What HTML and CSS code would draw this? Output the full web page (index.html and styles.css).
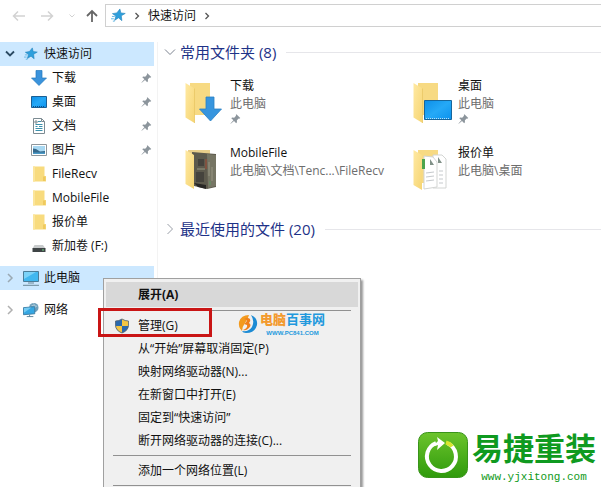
FILE: index.html
```html
<!DOCTYPE html>
<html lang="zh-CN">
<head>
    <meta charset="UTF-8">
    <meta name="viewport" content="width=device-width, initial-scale=1.0">
    <title>快速访问</title>
    <link rel="stylesheet" href="styles.css">
</head>
<body>
    <!-- shared icons -->
    <svg class="defs" aria-hidden="true">
        <defs>
            <linearGradient id="yellow" x1="0" y1="0" x2="1" y2="1">
                <stop offset="0" stop-color="#ffe9a2"/>
                <stop offset="1" stop-color="#f6d573"/>
            </linearGradient>
            <linearGradient id="sky" x1="0" y1="0" x2="1" y2="1">
                <stop offset="0" stop-color="#0d8fe8"/>
                <stop offset="0.5" stop-color="#25a9f7"/>
                <stop offset="1" stop-color="#0b92ee"/>
            </linearGradient>
            <linearGradient id="green" x1="0" y1="0" x2="0" y2="1">
                <stop offset="0" stop-color="#6cc42c"/>
                <stop offset="1" stop-color="#2f9a0c"/>
            </linearGradient>
        </defs>
        <symbol id="star" viewBox="0 0 16 16">
            <path d="M9.500 1l1 4.200 4.700.600-4.200 2.500.600 5.200-3.600-3-4.200 2.700 1.400-4.600L1.500 6l4.700-.800z" fill="#2e9fdc" stroke="#1c7fb8" stroke-width=".6"/>
            <path d="M1 9h3M0 11.500h3M2 14h2" stroke="#5bb5e3"/>
        </symbol>
        <symbol id="pin" viewBox="0 0 12 12">
            <path d="M7 .800L11.200 5l-1 .600-.700-.200-2 2 .100 2.200-.900.900L4.400 8.200.800 11.200l-.300-.300 3.200-3.500L1.400 5.200l.900-.900 2.300.200 2-2-.300-.800z" fill="#8c959c"/>
        </symbol>
        <symbol id="folder" viewBox="0 0 16 16">
            <path d="M2 .500h11.500v9.500h1.500v5.500H2z" fill="#f8db7e"/>
            <path d="M2 .500h2v15H2z" fill="#fbe59b"/>
            <path d="M12 10.500h2.500v4.500H12z" fill="#efc95e"/>
        </symbol>
        <symbol id="arrow" viewBox="0 0 16 16">
            <path d="M5 .500h6v7.500h4.500L8 15.500.500 8H5z" fill="#3a93dc" stroke="#2479bd" stroke-width=".7"/>
        </symbol>
        <symbol id="big-folder" viewBox="0 0 40 44">
            <path d="M6 3h20v32H6z" fill="#f7da83"/>
            <path d="M1.500 3l9 5.500V43l-9-5.500z" fill="url(#yellow)"/>
            <path d="M10.500 8.500V43" stroke="#e9c765" stroke-width=".8"/>
        </symbol>
    </svg>

    <header class="toolbar">
        <div class="nav-buttons">
            <button aria-label="后退"><svg width="14" height="12" viewBox="0 0 14 12"><path d="M13 6H1.500M6 1.500L1.500 6 6 10.500" stroke="#d2d2d2" stroke-width="1.500" fill="none"/></svg></button>
            <button aria-label="前进"><svg width="14" height="12" viewBox="0 0 14 12"><path d="M1 6h11.500M8 1.500L12.500 6 8 10.500" stroke="#d2d2d2" stroke-width="1.500" fill="none"/></svg></button>
            <button class="recent" aria-label="最近浏览的位置"><svg width="8" height="6" viewBox="0 0 8 6"><path d="M1.500 1.500L4 4l2.500-2.500" stroke="#d2d2d2" fill="none"/></svg></button>
            <button aria-label="上移"><svg width="12" height="14" viewBox="0 0 12 14"><path d="M6 13V2M1 7l5-5 5 5" stroke="#666" stroke-width="1.800" fill="none"/></svg></button>
        </div>
        <div class="address">
            <svg width="15" height="15"><use href="#star"/></svg>
            <svg class="sep" width="6" height="8" viewBox="0 0 6 8"><path d="M1.500 1L4.500 4l-3 3" stroke="#555" stroke-width="1.300" fill="none"/></svg>
            <a href="#">快速访问</a>
            <svg class="sep" width="6" height="8" viewBox="0 0 6 8"><path d="M1.500 1L4.500 4l-3 3" stroke="#555" stroke-width="1.300" fill="none"/></svg>
        </div>
    </header>

    <div class="explorer">
        <nav class="sidebar">
            <a href="#" class="row root active">
                <svg class="chevron" width="10" height="8" viewBox="0 0 10 8"><path d="M1 1.500L5 5.500l4-4" stroke="#2b4a63" stroke-width="1.800" fill="none"/></svg>
                <svg width="16" height="14"><use href="#star"/></svg>
                <span>快速访问</span>
            </a>
            <a href="#" class="row">
                <svg width="16" height="16"><use href="#arrow"/></svg>
                <span>下载</span>
                <svg class="pin" width="11" height="12"><use href="#pin"/></svg>
            </a>
            <a href="#" class="row">
                <svg width="16" height="16" viewBox="0 0 16 16"><path d="M.500 2.500h15v11H.500z" fill="url(#sky)" stroke="#1b5f94"/><path d="M2 12.500h12" stroke="#0b4f86" stroke-dasharray="1 1"/></svg>
                <span>桌面</span>
                <svg class="pin" width="11" height="12"><use href="#pin"/></svg>
            </a>
            <a href="#" class="row">
                <svg width="16" height="16" viewBox="0 0 16 16"><path d="M2.500.500h8l3 3v12h-11z" fill="#fff" stroke="#7c8b92"/><path d="M7 3.500h3M4.500 6.500h7M4.500 8.500h2M8 8.500h3.500M4.500 10.500h7M4.500 12.500h7" stroke="#3b91ad"/><path d="M4 3h2v2H4zM10.500.500v3h3" fill="none" stroke="#7c8b92"/></svg>
                <span>文档</span>
                <svg class="pin" width="11" height="12"><use href="#pin"/></svg>
            </a>
            <a href="#" class="row">
                <svg width="16" height="16" viewBox="0 0 16 16"><path d="M.500 2.500h15v11H.500z" fill="#fff" stroke="#8e969b"/><path d="M2 4h12v8H2z" fill="#a8d8f2"/><path d="M2 6.500l3 .500 4 2.500 5-.500v3H2z" fill="#36698c"/><path d="M2 10.500h12v1.500H2z" fill="#4b9ac7"/></svg>
                <span>图片</span>
                <svg class="pin" width="11" height="12"><use href="#pin"/></svg>
            </a>
            <a href="#" class="row">
                <svg width="16" height="16"><use href="#folder"/></svg>
                <span>FileRecv</span>
            </a>
            <a href="#" class="row">
                <svg width="16" height="16"><use href="#folder"/></svg>
                <span>MobileFile</span>
            </a>
            <a href="#" class="row">
                <svg width="16" height="16"><use href="#folder"/></svg>
                <span>报价单</span>
            </a>
            <a href="#" class="row">
                <svg width="16" height="16" viewBox="0 0 16 16"><path d="M3.500 7h8.500l2.500 3.500H1.500z" fill="#c8cbcc"/><path d="M1.500 10h13v4h-13z" fill="#3f4446"/><path d="M11 12h2" stroke="#6fd483"/></svg>
                <span>新加卷 (F:)</span>
            </a>
            <a href="#" class="row root active group">
                <svg class="chevron" width="10" height="10" viewBox="0 0 10 10"><path d="M3 1l4 4-4 4" stroke="#9aa9b3" stroke-width="1.500" fill="none"/></svg>
                <svg width="16" height="16" viewBox="1 0 16 16"><path d="M1.500 1.500h15v10h-15z" fill="#41b7ef" stroke="#4b7d98"/><path d="M2 9L14 2H2z" fill="#7bd2f8"/><path d="M6 13h6M1 15.300h16" stroke="#6b8796"/></svg>
                <span>此电脑</span>
            </a>
            <a href="#" class="row root group">
                <svg class="chevron" width="10" height="10" viewBox="0 0 10 10"><path d="M3 1l4 4-4 4" stroke="#b0b0b0" stroke-width="1.500" fill="none"/></svg>
                <svg width="16" height="16" viewBox="0 0 17 16"><circle cx="11.500" cy="5.500" r="5" fill="#6f9fba"/><path d="M9 3q3 1 6 1M11 1q2 2 2 5" stroke="#b5d0de" fill="none"/><path d="M.500 5.500l12-1v7.500l-12 1z" fill="#35a7e3" stroke="#3c7ea5"/><path d="M1 6l8-.600L1 11z" fill="#74cbf3"/><path d="M4 15h7M7 13v2" stroke="#5b8299"/></svg>
                <span>网络</span>
            </a>
        </nav>

        <main class="content">
            <h2>
                <svg width="12" height="12" viewBox="0 0 12 12"><path d="M1 3.500l5 5 5-5" stroke="#7c8390" fill="none"/></svg>
                常用文件夹 (8)
            </h2>
            <div class="tiles">
                <a href="#" class="tile">
                    <svg width="40" height="44" viewBox="0 0 40 44"><use href="#big-folder"/><path d="M22 17h8v12h7.500L26.500 41 15.500 29H22z" fill="#3795de" stroke="#2a80c4" stroke-width=".8"/></svg>
                    <div class="info">
                        <span>下载</span>
                        <small>此电脑</small>
                        <svg class="pin" width="11" height="12"><use href="#pin"/></svg>
                    </div>
                </a>
                <a href="#" class="tile">
                    <svg width="40" height="44" viewBox="0 0 40 44"><use href="#big-folder"/><path d="M12.500 20.500h27v19h-27z" fill="url(#sky)" stroke="#17669c"/><path d="M14 38.500h24" stroke="#b8e0f7" stroke-dasharray="1 1"/></svg>
                    <div class="info">
                        <span>桌面</span>
                        <small>此电脑</small>
                        <svg class="pin" width="11" height="12"><use href="#pin"/></svg>
                    </div>
                </a>
                <a href="#" class="tile">
                    <svg width="40" height="44" viewBox="0 0 40 44">
                        <path d="M4 3h22v4H4z" fill="#e9cf8b"/>
                        <path d="M8 5l24 2v33l-9 2-13-3z" fill="#5d5a4d"/>
                        <path d="M23 7l9 1v31l-8 2z" fill="#767564"/>
                        <path d="M14 12h6v7h-6zM12 25h8v10h-8z" fill="#45433d"/>
                        <path d="M25 15v14M28 20v14M13 22h8" stroke="#989783"/>
                        <path d="M22 12v10" stroke="#a54a35"/>
                        <path d="M26 34v4" stroke="#5f9863"/>
                        <path d="M10 36l12 2v4l-8-2z" fill="#282725"/>
                        <path d="M1.500 3l8.500 5v34l-8.500-5z" fill="url(#yellow)"/>
                    </svg>
                    <div class="info">
                        <span>MobileFile</span>
                        <small>此电脑\文档\Tenc...\FileRecv</small>
                    </div>
                </a>
                <a href="#" class="tile">
                    <svg width="40" height="44" viewBox="0 0 40 44">
                        <path d="M6 3h20v33H6z" fill="#f7da83"/>
                        <path d="M21 8h9l4 4v29H21z" fill="#fff" stroke="#d3d5d3"/>
                        <path d="M12 9l9 1 4 5v25l-13 2z" fill="#fff" stroke="#d3d5d3"/>
                        <path d="M11.500 12v10" stroke="#4da44d" stroke-width="3"/>
                        <path d="M18 12v6h4zM26 10v6h4z" fill="#819188"/>
                        <path d="M14 26l8-1M14 30l8-1M14 34l8-1M27 24h4M27 28h4M27 32h4M27 36h4" stroke="#c5c9cc"/>
                        <path d="M1.500 3l8.500 5v35l-8.500-5z" fill="url(#yellow)"/>
                    </svg>
                    <div class="info">
                        <span>报价单</span>
                        <small>此电脑\桌面</small>
                    </div>
                </a>
            </div>
            <h2>
                <svg width="12" height="12" viewBox="0 0 12 12"><path d="M3.500 1l5 5-5 5" stroke="#9a9fa8" fill="none"/></svg>
                最近使用的文件 (20)
            </h2>
        </main>
    </div>

    <div class="context-menu" role="menu">
        <button class="default" role="menuitem">展开(A)</button>
        <hr>
        <button class="manage" role="menuitem">
            <svg width="16" height="16" viewBox="0 0 16 16">
                <path d="M8 1Q5 3 1.500 3v4q0 5.500 6.500 8z" fill="#2b69ad"/>
                <path d="M8 1q3 2 6.500 2v4q0 5.500-6.500 8z" fill="#f4c542"/>
                <path d="M1.500 8H8v7Q2.200 12.800 1.500 8z" fill="#f4c542"/>
                <path d="M8 8h6.500Q13.800 12.800 8 15z" fill="#2b69ad"/>
                <path d="M8 1Q5 3 1.500 3v4q0 5.500 6.500 8 6.500-2.500 6.500-8V3Q11 3 8 1z" fill="none" stroke="#526170" stroke-width=".8"/>
            </svg>
            管理(G)
        </button>
        <button role="menuitem">从“开始”屏幕取消固定(P)</button>
        <button role="menuitem">映射网络驱动器(N)...</button>
        <button role="menuitem">在新窗口中打开(E)</button>
        <button role="menuitem">固定到“快速访问”</button>
        <button role="menuitem">断开网络驱动器的连接(C)...</button>
        <hr>
        <button role="menuitem">添加一个网络位置(L)</button>
        <hr>
        <div class="highlight"></div>
        <div class="site-mark">
            <svg width="20" height="20" viewBox="0 0 20 20">
                <path d="M11 1Q3 1 1 8q-1 5 3 9 0-4 3-8t4-8z" fill="#f39a1e"/>
                <path d="M13 1q7 3 6 10-2 8-11 8-3 0-4-2 7 1 10-4 3-6-1-12z" fill="#1d8bd4"/>
                <path d="M6 5q4-2 6 0 1 2-1 4 3 2 0 5-3 3-6 2 5-2 4-5l-3-1q3-2 3-4z" fill="#f07f19"/>
            </svg>
            <div>
                <strong><b>电脑</b>百事网</strong>
                <small>WWW.PC841.COM</small>
            </div>
        </div>
    </div>

    <footer class="brand">
        <svg width="50" height="46" viewBox="0 0 50 46">
            <rect x=".5" y=".5" width="49" height="45" rx="9" fill="url(#green)" stroke="#39941a"/>
            <path d="M30 11.500A14.500 14.500 0 1 1 18 11" fill="none" stroke="#fff" stroke-width="4"/>
            <path d="M28 10.500q4 1 6 4" fill="none" stroke="#d9e62e" stroke-width="4"/>
            <path d="M19 5l8 6-8 7 1-5-6 2 6-6z" fill="#fff"/>
        </svg>
        <div>
            <strong>易捷重装</strong>
            <span>www.yjxitong.com</span>
        </div>
    </footer>
</body>
</html>
```
FILE: styles.css
```css
* {
    box-sizing: border-box;
}
body {
    margin: 0;
    min-height: 100vh;
    max-height: 100vh;
    overflow: hidden;
    position: relative;
    background: #fff;
    color: #111;
    font-family: "Open Sans", "Noto Sans CJK SC", sans-serif;
    font-size: 12px;
    line-height: 18px;
}
a {
    color: inherit;
    text-decoration: none;
}
button {
    border: none;
    background: none;
    padding: 0;
    font: inherit;
    color: inherit;
}
svg {
    flex: none;
    display: block;
}
.defs {
    position: absolute;
    width: 0;
    height: 0;
}

/* top bar */
.toolbar {
    display: flex;
    padding-top: 4px;
    height: 42px;
}
.nav-buttons {
    display: flex;
    align-items: center;
    gap: 14px;
    width: 105px;
    height: 23px;
    padding-left: 12px;
}
.nav-buttons button:last-child {
    margin-left: -4px;
}
.address {
    flex: 1;
    display: flex;
    align-items: center;
    gap: 8px;
    height: 23px;
    padding-left: 5px;
    border: 1px solid #d0d0d0;
    border-right: none;
}

/* navigation pane */
.explorer {
    display: flex;
}
.sidebar {
    width: 158px;
    padding-right: 3px;
    border-right: 1px solid #f3f3f3;
}
.row {
    display: flex;
    align-items: center;
    gap: 5px;
    height: 24px;
    padding: 0 2px 0 31px;
}
.row.root {
    padding-left: 5px;
}
.row.root .chevron {
    margin-right: 3px;
}
.row.active {
    background: #cce8ff;
}
.row.group {
    margin-top: 8px;
}
.row .pin {
    margin-left: auto;
}

/* folders */
.content {
    flex: 1;
    min-width: 0;
}
h2 {
    display: flex;
    align-items: center;
    gap: 4px;
    margin: 0;
    padding-left: 6px;
    height: 20px;
    font-size: 15px;
    font-weight: normal;
    color: #1e3287;
}
h2::after {
    content: "";
    flex: 1;
    margin-left: 6px;
    border-top: 1px solid #e6e6ea;
}
.tiles {
    display: grid;
    grid-template-columns: 228px 1fr;
    grid-auto-rows: 67px;
    padding: 15px 0 8px 26px;
}
.tile {
    display: flex;
    align-items: flex-start;
    gap: 6px;
}
.tile > svg {
    margin-top: 3px;
}
.info {
    display: flex;
    flex-direction: column;
    white-space: nowrap;
}
.info small {
    font-size: 12px;
    color: #6d6d6d;
}

/* right click menu */
.context-menu {
    position: absolute;
    left: 103px;
    top: 278px;
    width: 258px;
    padding: 3px 2px;
    background: #f0f0f0;
    border: 1px solid #a0a0a0;
    box-shadow: 2px 2px 2px rgba(0,0,0,0.4);
}
.context-menu button {
    display: flex;
    align-items: center;
    width: 100%;
    height: 23px;
    padding-left: 32px;
    white-space: nowrap;
}
.context-menu .default {
    height: 25px;
    background: #d8d8d8;
    font-weight: bold;
}
.context-menu .manage {
    gap: 8px;
    padding-left: 8px;
}
.context-menu hr {
    margin: 3px 7px;
    border: none;
    border-top: 1px solid #919191;
}
.highlight {
    position: absolute;
    left: -6px;
    top: 29px;
    width: 114px;
    height: 29px;
    border: 3px solid #c91515;
}
.site-mark {
    position: absolute;
    left: 134px;
    top: 31px;
    display: flex;
    align-items: center;
    gap: 2px;
    color: #2299dd;
}
.site-mark strong {
    display: block;
    font-size: 13px;
    line-height: 19px;
}
.site-mark b {
    color: #f39a2e;
}
.site-mark small {
    display: block;
    font: bold 6px/8px "Liberation Sans", sans-serif;
    text-align: center;
}

/* bottom right logo */
.brand {
    position: absolute;
    right: 5px;
    bottom: 3px;
    display: flex;
    align-items: center;
    gap: 4px;
    color: #0f9a20;
}
.brand strong {
    display: block;
    font-size: 31px;
    line-height: 45px;
}
.brand span {
    display: block;
    font: 11px/13px "Liberation Mono", monospace;
    text-align: center;
}
```
